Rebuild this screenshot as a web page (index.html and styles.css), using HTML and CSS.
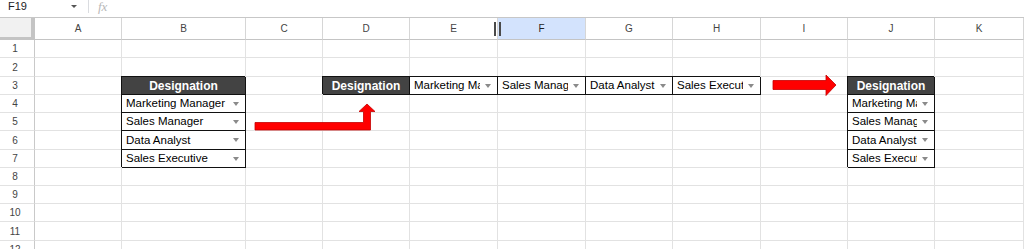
FILE: index.html
```html
<!DOCTYPE html>
<html>
<head>
<meta charset="utf-8">
<title>Sheet</title>
<link rel="stylesheet" href="styles.css">
</head>
<body>
<div class="sheet">
  <div class="fbar">
    <div class="namebox"><span class="ref">F19</span><i class="nb-tri"></i></div>
    <div class="fsep"></div>
    <span class="fx">fx</span>
  </div>

  <div class="row hdr">
    <div class="corner"></div>
    <div class="ch">A</div><div class="ch">B</div><div class="ch">C</div><div class="ch">D</div>
    <div class="ch colE">E<span class="resize"></span></div>
    <div class="ch sel">F</div><div class="ch">G</div><div class="ch">H</div><div class="ch">I</div><div class="ch">J</div><div class="ch">K</div>
  </div>

  <div class="row">
    <div class="rh">1</div>
    <div class="c"></div><div class="c"></div><div class="c"></div><div class="c"></div><div class="c"></div><div class="c"></div><div class="c"></div><div class="c"></div><div class="c"></div><div class="c"></div><div class="c"></div>
  </div>
  <div class="row tall">
    <div class="rh">2</div>
    <div class="c"></div><div class="c"></div><div class="c"></div><div class="c"></div><div class="c"></div><div class="c"></div><div class="c"></div><div class="c"></div><div class="c"></div><div class="c"></div><div class="c"></div>
  </div>
  <div class="row">
    <div class="rh">3</div>
    <div class="c"></div>
    <div class="c b dark">Designation</div>
    <div class="c"></div>
    <div class="c b dark">Designation</div>
    <div class="c b dd"><span class="t">Marketing Manager</span><i class="tri"></i></div>
    <div class="c b dd"><span class="t">Sales Manager</span><i class="tri"></i></div>
    <div class="c b dd"><span class="t">Data Analyst</span><i class="tri"></i></div>
    <div class="c b dd"><span class="t">Sales Executive</span><i class="tri"></i></div>
    <div class="c"></div>
    <div class="c b dark">Designation</div>
    <div class="c"></div>
  </div>
  <div class="row">
    <div class="rh">4</div>
    <div class="c"></div>
    <div class="c b dd"><span class="t">Marketing Manager</span><i class="tri"></i></div>
    <div class="c"></div><div class="c"></div><div class="c"></div><div class="c"></div><div class="c"></div><div class="c"></div><div class="c"></div>
    <div class="c b dd"><span class="t">Marketing Manager</span><i class="tri"></i></div>
    <div class="c"></div>
  </div>
  <div class="row">
    <div class="rh">5</div>
    <div class="c"></div>
    <div class="c b dd"><span class="t">Sales Manager</span><i class="tri"></i></div>
    <div class="c"></div><div class="c"></div><div class="c"></div><div class="c"></div><div class="c"></div><div class="c"></div><div class="c"></div>
    <div class="c b dd"><span class="t">Sales Manager</span><i class="tri"></i></div>
    <div class="c"></div>
  </div>
  <div class="row tall">
    <div class="rh">6</div>
    <div class="c"></div>
    <div class="c b dd"><span class="t">Data Analyst</span><i class="tri"></i></div>
    <div class="c"></div><div class="c"></div><div class="c"></div><div class="c"></div><div class="c"></div><div class="c"></div><div class="c"></div>
    <div class="c b dd"><span class="t">Data Analyst</span><i class="tri"></i></div>
    <div class="c"></div>
  </div>
  <div class="row">
    <div class="rh">7</div>
    <div class="c"></div>
    <div class="c b dd"><span class="t">Sales Executive</span><i class="tri"></i></div>
    <div class="c"></div><div class="c"></div><div class="c"></div><div class="c"></div><div class="c"></div><div class="c"></div><div class="c"></div>
    <div class="c b dd"><span class="t">Sales Executive</span><i class="tri"></i></div>
    <div class="c"></div>
  </div>
  <div class="row">
    <div class="rh">8</div>
    <div class="c"></div><div class="c"></div><div class="c"></div><div class="c"></div><div class="c"></div><div class="c"></div><div class="c"></div><div class="c"></div><div class="c"></div><div class="c"></div><div class="c"></div>
  </div>
  <div class="row">
    <div class="rh">9</div>
    <div class="c"></div><div class="c"></div><div class="c"></div><div class="c"></div><div class="c"></div><div class="c"></div><div class="c"></div><div class="c"></div><div class="c"></div><div class="c"></div><div class="c"></div>
  </div>
  <div class="row">
    <div class="rh">10</div>
    <div class="c"></div><div class="c"></div><div class="c"></div><div class="c"></div><div class="c"></div><div class="c"></div><div class="c"></div><div class="c"></div><div class="c"></div><div class="c"></div><div class="c"></div>
  </div>
  <div class="row tall">
    <div class="rh">11</div>
    <div class="c"></div><div class="c"></div><div class="c"></div><div class="c"></div><div class="c"></div><div class="c"></div><div class="c"></div><div class="c"></div><div class="c"></div><div class="c"></div><div class="c"></div>
  </div>
  <div class="row">
    <div class="rh">12</div>
    <div class="c"></div><div class="c"></div><div class="c"></div><div class="c"></div><div class="c"></div><div class="c"></div><div class="c"></div><div class="c"></div><div class="c"></div><div class="c"></div><div class="c"></div>
  </div>
</div>

<svg class="arrows" width="1024" height="249" viewBox="0 0 1024 249" xmlns="http://www.w3.org/2000/svg">
  <polygon points="255,122.5 363.5,122.5 363.5,111.5 359,111.5 367,104 375,111.5 370.5,111.5 370.5,130 255,130" fill="#ff0000" stroke="#c40000" stroke-width="0.8" stroke-linejoin="miter"/>
  <polygon points="773,80.5 826,80.5 826,75 836,85 826,95.5 826,89.5 773,89.5" fill="#ff0000" stroke="#c40000" stroke-width="0.8"/>
</svg>
</body>
</html>
```

FILE: styles.css
```css
html, body {
  margin: 0;
  padding: 0;
  background: #ffffff;
}
body {
  position: relative;
  width: 1024px;
  height: 249px;
  overflow: hidden;
  font-family: "Liberation Sans", Arial, sans-serif;
  color: #000;
}

.sheet {
  width: 1024px;
}

/* formula bar */
.fbar {
  height: 18px;
  box-sizing: border-box;
  border-bottom: 1px solid #c7c7c7;
  display: flex;
  align-items: flex-start;
}
.namebox {
  width: 88px;
  height: 17px;
  box-sizing: border-box;
  padding-left: 8px;
  display: flex;
  align-items: center;
}
.ref {
  font-size: 11px;
  color: #202124;
  line-height: 13px;
  margin-top: -4px;
  flex: 1;
}
.nb-tri {
  width: 0;
  height: 0;
  border-left: 3px solid transparent;
  border-right: 3px solid transparent;
  border-top: 3px solid #555;
  margin-right: 11px;
  margin-top: -5px;
}
.fsep {
  width: 1px;
  height: 13px;
  background: #dadce0;
}
.fx {
  font-family: "Liberation Serif", "Times New Roman", serif;
  font-style: italic;
  font-size: 13px;
  line-height: 13px;
  color: #b8b8b8;
  margin-left: 9px;
}

/* grid rows */
.row {
  display: grid;
  grid-template-columns: 35px 87px 124px 77px 87px 88px 88px 87px 88px 87px 87px 89px;
  height: 18px;
}
.row.tall {
  height: 19px;
}
.row.hdr {
  height: 22px;
}
.row > div {
  box-sizing: border-box;
  border-right: 1px solid #e2e2e2;
  border-bottom: 1px solid #e2e2e2;
  min-width: 0;
}

/* headers */
.corner {
  background: #f1f1f1;
  border-right: 4px solid #c4c4c4 !important;
  border-bottom: 3px solid #c4c4c4 !important;
}
.ch {
  position: relative;
  font-size: 10px;
  color: #444;
  display: flex;
  align-items: center;
  justify-content: center;
  border-right-color: #d6d6d6 !important;
  border-bottom-color: #c4c4c4 !important;
}
.ch.sel {
  background: #d3e3fd;
  color: #1f1f1f;
}
.resize {
  position: absolute;
  left: 84px;
  top: 4px;
  width: 3px;
  height: 14px;
  border-left: 2px solid #4a4a4a;
  border-right: 2px solid #4a4a4a;
  z-index: 2;
}
.rh {
  font-size: 10px;
  color: #444;
  display: flex;
  align-items: center;
  justify-content: center;
  padding-right: 4px;
  border-right-color: #c9c9c9 !important;
}

/* bordered cells */
.c.b {
  border-right-color: #111;
  border-bottom-color: #111;
  box-shadow: -1px -1px 0 #111;
}
.dark {
  background: #434343;
  color: #fff;
  font-weight: bold;
  font-size: 12px;
  display: flex;
  align-items: center;
  justify-content: center;
}
.dd {
  display: flex;
  align-items: center;
  font-size: 11.5px;
  color: #000;
}
.dd .t {
  flex: 1;
  min-width: 0;
  overflow: hidden;
  white-space: nowrap;
  padding-left: 4px;
  line-height: 17px;
}
.dd .tri {
  flex: none;
  width: 0;
  height: 0;
  border-left: 3px solid transparent;
  border-right: 3px solid transparent;
  border-top: 4px solid #8a8a8a;
  margin: 0 6px 0 5px;
}

/* overlay arrows */
.arrows {
  position: absolute;
  left: 0;
  top: 0;
  pointer-events: none;
}
```
